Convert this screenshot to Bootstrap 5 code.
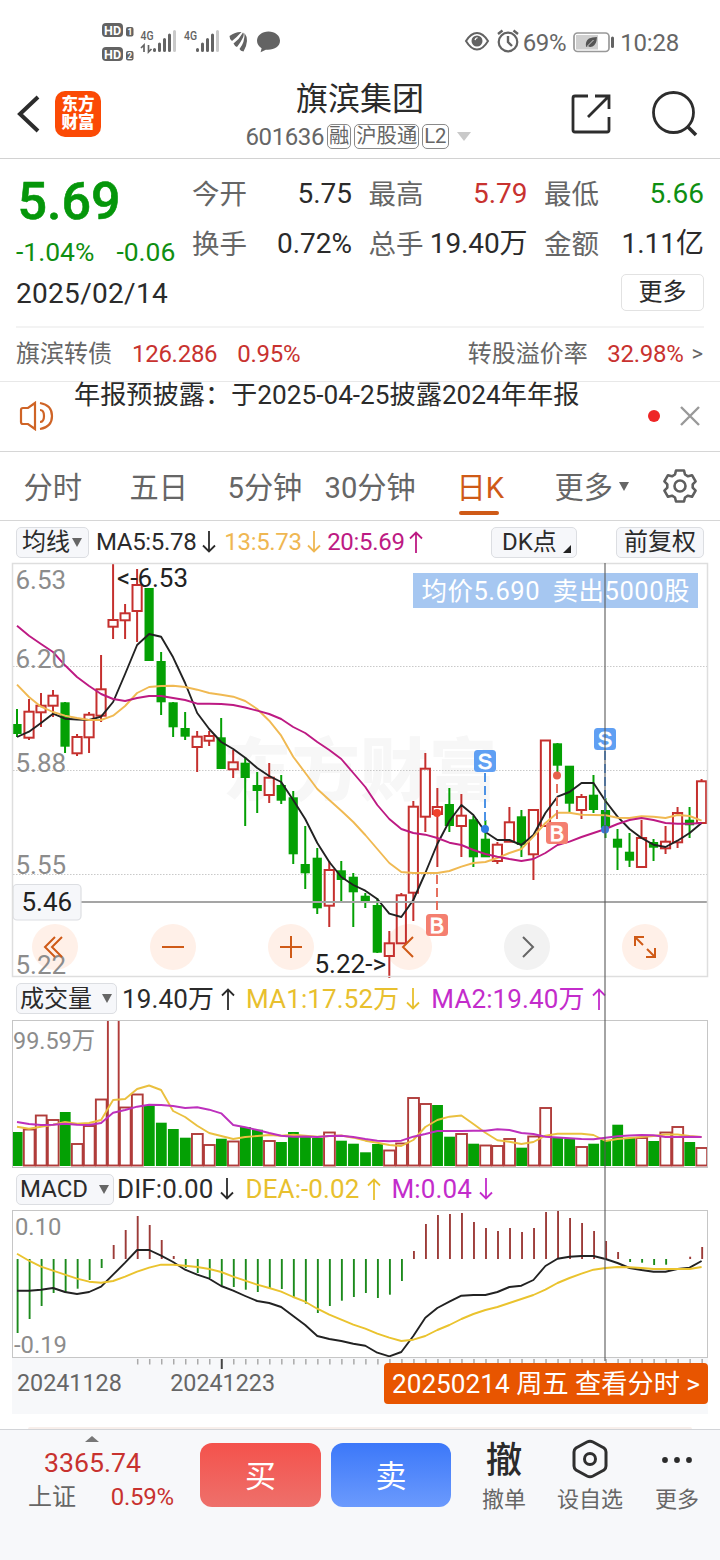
<!DOCTYPE html>
<html lang="zh-CN">
<head>
<meta charset="utf-8">
<meta name="viewport" content="width=device-width, initial-scale=1">
<title>旗滨集团 601636</title>
<link href="https://cdn.jsdelivr.net/npm/bootstrap@5.3.0/dist/css/bootstrap.min.css" rel="stylesheet">
<style>
  :root { --up:#c8322f; --down:#0f8f12; --ink:#2b2b2b; --dim:#666; --plum:#bd1a83; --brand:#cf5a17; }
  body { width:720px; height:1560px; overflow:hidden; background:#fff; color:var(--ink); font-family:Roboto,"Noto Sans CJK SC",sans-serif; font-weight:400; line-height:1; }
  svg { display:block; flex:none; overflow:visible; }
  #volume, .arrow { overflow:hidden; }
  svg text { font-family:Roboto,"Noto Sans CJK SC",sans-serif; }
  .c-up { color:var(--up); } .c-down { color:var(--down); } .c-dim { color:var(--dim); }
  .c-gold { color:#efb752; } .c-plum { color:var(--plum); } .c-yellow { color:#e8c02e; } .c-violet { color:#c32ccb; }
  .status { height:78px; padding:6px 41px 0 100px; color:#666; font-size:24px; }
  .titlebar { height:81px; border-bottom:1px solid #d2d2d2; display:grid; grid-template-columns:1fr auto 1fr; }
  .app-logo { width:46px; height:46px; border-radius:10px; background:#fb4a05; color:#fff; font-size:16.5px; line-height:18px; font-weight:900; padding-top:5px; margin-left:15px; }
  .stock-name { font-size:32px; line-height:36px; }
  .stock-code { font-size:24px; height:29px; margin-top:5px; margin-left:-4px; }
  .chip { border:1.5px solid #8a8a8a; border-radius:5px; font-size:20.3px; height:25px; line-height:23px; padding:0 1px; margin-left:3px; }
  .caret { width:0; height:0; border:6px solid transparent; border-bottom:0; border-top:9px solid #666; }
  .quote { height:167px; padding:9px 16px 0; }
  .big-price { font-size:52px; font-weight:500; line-height:67px; padding-left:1.5px; color:#05960a; -webkit-text-stroke:.6px #05960a; }
  .stats { display:grid; grid-template-columns:160px 159px 160px; grid-auto-rows:50px; column-gap:16.5px; font-size:28px; line-height:50px; padding-top:1px; }
  .stats .label { color:var(--dim); font-size:27.5px; position:relative; top:1px; }
  .more-btn { width:83px; height:37px; border:1.5px solid #e2e2e2; border-radius:5px; background:#fff; color:var(--ink); font-size:24px; line-height:33px; padding:0; margin-bottom:2px; }
  .bond { height:55px; margin:0 16px; border-top:2px solid #f3f3f3; font-size:24px; padding-bottom:2px; }
  .bond .c-up { letter-spacing:-.28px; }
  .news { height:71px; border-top:1px solid #e8e8e8; border-bottom:1px solid #d6d6d6; padding:0 20px 2px 18px; }
  .news-text { font-size:26.2px; line-height:26px; margin-left:20px; }
  .red-dot { width:12px; height:12px; border-radius:50%; background:#ee2525; }
  .periods { height:69px; border-bottom:1px solid #d6d6d6; display:grid; grid-template-columns:106px 98px 97px 132px 98px 107px 1fr; padding:0 0 0 23.5px; font-size:29.2px; color:var(--dim); }
  .periods span { padding-top:6px; }
  .periods .on { color:var(--brand); position:relative; }
  .periods .on::after { content:""; position:absolute; left:2px; width:40px; height:4px; border-radius:2px; background:var(--brand); bottom:5px; }
  .legend { padding:0 16px; font-size:26px; letter-spacing:.12px; }
  .legend.ma { font-size:24px; letter-spacing:-.32px; }
  .arrow { margin-left:7px; fill:none; stroke:currentColor; stroke-width:1.8; }
  .arrow + .item { margin-left:11px; }
  .ma .arrow { margin-left:6px; }
  .ma .arrow + .item { margin-left:8px; }
  .ma .arrow.c-gold { margin-left:5px; }
  .ma .arrow.c-gold + .item { margin-left:6.5px; }
  .ma .arrow.c-plum { margin-left:4px; }
  .tag-btn { background:#f6f7fa; border:1.5px solid #dcdee2; border-radius:5px; height:31px; font-size:24px; line-height:28px; color:var(--ink); padding:0 5px; white-space:nowrap; letter-spacing:0; }
  .tag-btn .caret { border-left-width:5px; border-right-width:5px; }
  .panels { position:relative; }
  .crosshair { position:absolute; left:604px; top:42px; width:2px; height:798px; background:#5a5a5a; opacity:.55; }
  .plot { margin-left:12px; }
  .dates { position:relative; margin:0 12px; height:56px; background:#f7f8fa; color:#666; font-size:23.3px; }
  .view-day { position:absolute; right:0; top:5px; height:41px; width:324px; background:#e85500; color:#fff; border-radius:4px; font-size:26.2px; line-height:42px; text-align:center; white-space:nowrap; }
  .peek { height:15px; padding:13px 28px 0; } .peek div { height:2px; background:#f8efeb; border-radius:12px 12px 0 0; }
  .tradebar { height:131px; background:#f7f8fa; border-top:1px solid #d2d4d8; padding:0 15px 0 16px; }
  .trade-btn { height:64px; border:0; border-radius:12px; color:#fff; font-size:31px; line-height:64px; padding:2px 0 0; }
  .buy { width:121px; background:linear-gradient(#f4524c,#ee706b); }
  .sell { width:120px; background:linear-gradient(#3c78f9,#6b9afd); }
  .act { font-size:22px; color:#666; } .act .pic { height:46px; display:flex; align-items:center; justify-content:center; color:#2b2b2b; }
</style>
</head>
<body>

<div class="status d-flex align-items-center">
  <svg width="184" height="46" viewBox="100 19 184 46" fill="#636363">
    <rect x="102" y="23" width="21" height="14" rx="4"/><rect x="102" y="47" width="21" height="14" rx="4"/>
    <rect x="126" y="27" width="7.500" height="9.500" rx="2"/><rect x="126" y="51" width="7.500" height="9.500" rx="2"/>
    <g fill="#fff" font-weight="700"><text x="104" y="34.500" font-size="12.500" textLength="17">HD</text><text x="104" y="58.500" font-size="12.500" textLength="17">HD</text><text x="127.500" y="35" font-size="8.500">1</text><text x="127.300" y="59" font-size="8.500">2</text></g>
    <g font-size="13.500" font-weight="500"><text x="140.500" y="40" textLength="13" lengthAdjust="spacingAndGlyphs">4G</text><text x="184" y="40" textLength="13" lengthAdjust="spacingAndGlyphs">4G</text></g>
    <path d="M141 48l3-3v7M148.500 45v7l3-3" fill="none" stroke="#636363" stroke-width="1.700"/>
    <g stroke="#636363" stroke-width="3" stroke-linecap="round"><path d="M154.500 49.500v1M159.500 44v6.500M164.500 39.500v11M169.500 35v15.500M197.500 49.500v1M202.500 44v6.500M207.500 39.500v11M212.500 35v15.500"/><path stroke="#c9c9c9" d="M174.500 31.500v19M217.500 31.500v19"/></g>
    <path d="M229.500 36Q236 31.500 241.500 32Q237 37 232 41Q229.500 39.500 229.500 36zM233.500 43.500Q239.500 39 243 32.500Q246 35 237 47Q234.500 46 233.500 43.500zM239.500 49Q245 42 244.500 33Q250 40 243.500 51.500Q240.500 51 239.500 49z"/>
    <path d="M268.500 31.500c-6.500 0-11.500 4-11.500 9.300 0 3.300 1.800 5.800 4.600 7.500l-1 4 5.200-2.600c8 .8 14.200-3 14.200-8.900 0-5.300-5-9.300-11.500-9.300z"/>
  </svg>
  <div class="d-flex align-items-center ms-auto">
    <svg width="57" height="28" viewBox="464 28 57 28" fill="none" stroke="#636363" stroke-width="2"><path d="M466 41Q471 33 477 33T488 41Q483 49.500 477 49.500T466 41z"/><circle cx="477" cy="41" r="4.500" fill="#636363"/><path d="M475 40q.5-2 2.500-2.300" stroke="#fff" stroke-width="1.300"/><circle cx="508" cy="42" r="9.300" stroke-width="2.200"/><path d="M508 36v6l4 4M498 34l4.500-3.500M518 34l-4.500-3.500" stroke-width="2.400"/></svg>
    <span style="letter-spacing:-.35px;margin:2px 0 0 2px">69%</span>
    <svg style="margin:0 4px 0 7px" width="43" height="22" viewBox="0 0 43 22"><rect x="1" y="2" width="35" height="18.500" rx="3.500" fill="#fff" stroke="#999" stroke-width="1.700"/><rect x="3" y="4" width="22" height="14.500" fill="#cfcfcf"/><path d="M13 16q-1-6 3-8.500 3-1.500 8-1.500-.5 8-4.500 9.500-3 1-4.500-.5z" fill="#555"/><path d="M14.500 15l6-6" stroke="#cfcfcf"/><rect x="38" y="5.500" width="3" height="11.500" rx="1.500" fill="#636363"/></svg>
    <span style="letter-spacing:-.2px;margin-top:2px">10:28</span>
  </div>
</div>

<header class="titlebar">
  <div class="d-flex align-items-center ps-3" style="height:72px">
    <svg width="24" height="38" viewBox="0 0 24 38"><path d="M22 2L4 19 22 36" fill="none" stroke="#2c2c2c" stroke-width="4"/></svg>
    <div class="app-logo text-center">东方<br>财富</div>
  </div>
  <div class="text-center" style="padding-top:3px">
    <div class="stock-name">旗滨集团</div>
    <div class="stock-code d-flex align-items-center c-dim"><span style="letter-spacing:-.4px">601636</span><span class="chip">融</span><span class="chip">沪股通</span><span class="chip">L2</span><i class="caret ms-2" style="border-left-width:7px;border-right-width:7px;border-top-color:#c9c9c9"></i></div>
  </div>
  <div class="d-flex align-items-center justify-content-end pe-3" style="height:72px">
    <svg width="42" height="42" viewBox="570 93 42 42" fill="none" stroke="#2d2d2d" stroke-width="2.800"><path d="M588 96H575q-2 0-2 2v32q0 2 2 2h32q2 0 2-2V117"/><path d="M595 96h14v13M608 97L588 117"/></svg>
    <svg style="margin-left:38px;margin-right:6px" width="48" height="48" viewBox="650 90 48 48" fill="none" stroke="#2d2d2d"><circle cx="673.500" cy="112.500" r="20" stroke-width="2.800"/><path d="M687 126l9 9" stroke-width="3.600"/></svg>
  </div>
</header>

<section class="quote">
  <div class="d-flex align-items-start" style="height:102px">
    <div style="width:176px">
      <div class="big-price">5.69</div>
      <div class="d-flex c-down" style="font-size:26.500px;gap:22px;line-height:34px"><span>-1.04%</span><span>-0.06</span></div>
    </div>
    <div class="stats">
      <div class="d-flex justify-content-between"><span class="label">今开</span><span>5.75</span></div>
      <div class="d-flex justify-content-between"><span class="label">最高</span><span class="c-up">5.79</span></div>
      <div class="d-flex justify-content-between"><span class="label">最低</span><span class="c-down">5.66</span></div>
      <div class="d-flex justify-content-between"><span class="label">换手</span><span>0.72%</span></div>
      <div class="d-flex justify-content-between"><span class="label">总手</span><span style="letter-spacing:-.1px">19.40万</span></div>
      <div class="d-flex justify-content-between"><span class="label">金额</span><span>1.11亿</span></div>
    </div>
  </div>
  <div class="d-flex justify-content-between align-items-center" style="height:46px"><span style="font-size:28px;letter-spacing:.3px;padding-top:2px">2025/02/14</span><button class="more-btn">更多</button></div>
</section>

<section class="bond d-flex align-items-center">
  <span class="c-dim">旗滨转债</span><span class="c-up" style="margin-left:20px">126.286</span><span class="c-up" style="margin-left:20px">0.95%</span>
  <span class="c-dim ms-auto">转股溢价率</span><span class="c-up" style="margin-left:19.500px">32.98%</span><span class="c-dim" style="font-size:22px;margin:0 1px 0 8px">&gt;</span>
</section>

<section class="news d-flex">
  <svg class="mt-auto mb-auto" width="36" height="34" viewBox="0 0 36 34" fill="none" stroke="#cf6426" stroke-width="2.200"><path d="M17 4v26l-7-5H5q-2 0-2-2V11q0-2 2-2h5zM22 11q4 0 4 6t-4 6M22 4q12 2 12 13t-12 13"/></svg>
  <div class="news-text">年报预披露：于2025-04-25披露2024年年报</div>
  <div class="d-flex align-items-center ms-auto gap-3"><i class="red-dot"></i><svg class="ms-1" width="20" height="20" viewBox="0 0 20 20"><path d="M1 1l18 18M19 1L1 19" stroke="#999" stroke-width="2.400"/></svg></div>
</section>

<nav class="periods align-items-center">
  <span>分时</span><span>五日</span><span>5分钟</span><span>30分钟</span><span class="on h-100 d-flex align-items-center">日K</span>
  <span class="d-flex align-items-center">更多<i class="caret" style="border-left-width:5px;border-right-width:5px;margin:-4px 0 0 6px"></i></span>
  <svg width="36" height="36" viewBox="-18 -18 36 36" fill="none" stroke="#5f5f5f" stroke-width="2.600" stroke-linejoin="round"><path d="M-4-15.500H4L5-11.500 8-9.700 12-10.800 15.600-4.600 12.700-1.700V1.700L15.600 4.600 12 10.800 8 9.700 5 11.500 4 15.500H-4L-5 11.500-8 9.700-12 10.800-15.600 4.600-12.700 1.700V-1.700L-15.600-4.600-12-10.800-8-9.700-5-11.500Z"/><circle r="5.500"/></svg>
</nav>

<main class="panels">
  <div class="legend ma d-flex align-items-center" style="height:42px">
    <span class="tag-btn d-flex align-items-center" style="width:73px">均线<i class="caret" style="margin-left:2px"></i></span>
    <span style="margin-left:7px">MA5:5.78</span><svg class="arrow" width="14" height="22" viewBox="0 0 14 22"><path d="M7 0v20M1 14.500l6 6 6-6"/></svg>
    <span class="item c-gold">13:5.73</span><svg class="arrow c-gold" width="14" height="22" viewBox="0 0 14 22"><path d="M7 0v20M1 14.500l6 6 6-6"/></svg>
    <span class="item c-plum">20:5.69</span><svg class="arrow c-plum" width="14" height="22" viewBox="0 0 14 22"><path d="M7 22V2M1 7.500l6-6 6 6"/></svg>
    <span class="tag-btn ms-auto d-flex" style="width:86px;padding-left:10px">DK点<svg class="ms-auto align-self-end mb-1" width="8" height="8"><path d="M8 0v8H0z" fill="#222"/></svg></span>
    <span class="tag-btn" style="margin-left:39px;padding:0 7px">前复权</span>
  </div>
  <svg class="plot" id="price" width="696" height="414" viewBox="12 563 696 414"></svg>
  <div class="legend d-flex align-items-center" style="height:43px">
    <span class="tag-btn d-flex align-items-center" style="width:101px;padding:0 4px 0 3px">成交量<i class="caret ms-auto"></i></span>
    <span style="margin-left:5px">19.40万</span><svg class="arrow" width="14" height="22" viewBox="0 0 14 22"><path d="M7 22V2M1 7.500l6-6 6 6"/></svg>
    <span class="item c-yellow">MA1:17.52万</span><svg class="arrow c-yellow" width="14" height="22" viewBox="0 0 14 22"><path d="M7 0v20M1 14.500l6 6 6-6"/></svg>
    <span class="item c-violet">MA2:19.40万</span><svg class="arrow c-violet" width="14" height="22" viewBox="0 0 14 22"><path d="M7 22V2M1 7.500l6-6 6 6"/></svg>
  </div>
  <svg class="plot" id="volume" width="696" height="148" viewBox="12 1020 696 148"></svg>
  <div class="legend d-flex align-items-center" style="height:42px">
    <span class="tag-btn d-flex align-items-center" style="width:98px;padding:0 4px 0 3px">MACD<i class="caret ms-auto"></i></span>
    <span style="margin-left:3px">DIF:0.00</span><svg class="arrow" width="14" height="22" viewBox="0 0 14 22"><path d="M7 0v20M1 14.500l6 6 6-6"/></svg>
    <span class="item c-yellow">DEA:-0.02</span><svg class="arrow c-yellow" width="14" height="22" viewBox="0 0 14 22"><path d="M7 22V2M1 7.500l6-6 6 6"/></svg>
    <span class="item c-violet">M:0.04</span><svg class="arrow c-violet" width="14" height="22" viewBox="0 0 14 22"><path d="M7 0v20M1 14.500l6 6 6-6"/></svg>
  </div>
  <svg class="plot" id="macd" width="696" height="148" viewBox="12 1210 696 148"></svg>
  <div class="dates">
    <svg id="ticks" width="696" height="12" viewBox="12 1358 696 12"></svg>
    <div class="d-flex" style="padding:2px 0 0 5px;gap:48.500px"><span>20241128</span><span>20241223</span></div>
    <div class="view-day">20250214 周五 查看分时 &gt;</div>
  </div>
  <div class="crosshair"></div>
</main>
<div class="peek"><div></div></div>

<footer class="tradebar d-flex align-items-start">
  <div style="width:184px;padding-top:6px">
    <i class="caret d-block" style="margin-left:69px;border:7px solid transparent;border-top:0;border-bottom:6px solid #777"></i>
    <div class="c-up" style="font-size:26.700px;line-height:34px;margin:4px 0 0 28px">3365.74</div>
    <div class="d-flex justify-content-between" style="font-size:24px;line-height:34px;padding:0 26px 0 12px"><span class="c-dim">上证</span><span class="c-up" style="letter-spacing:-.2px">0.59%</span></div>
  </div>
  <button class="trade-btn buy" style="margin-top:13px">买</button>
  <button class="trade-btn sell" style="margin:13px 0 0 10px">卖</button>
  <div class="act text-center" style="margin:7px 0 0 31px;width:44px"><div class="pic" style="font-size:36.500px;font-weight:500;padding-top:3px">撤</div><div style="margin-top:6px">撤单</div></div>
  <div class="act text-center" style="margin:7px 0 0 31px;width:66px"><div class="pic" style="padding-bottom:3px"><svg width="38" height="42" viewBox="-19 -21 38 42" fill="none" stroke="#2f2f2f" stroke-width="3"><path d="M-3-17Q0-18.500 3-17L14-11Q16-9.500 16-7V7Q16 9.500 14 11L3 17Q0 18.500-3 17L-14 11Q-16 9.500-16 7V-7Q-16-9.500-14-11Z"/><circle r="5.500"/></svg></div><div style="margin-top:6px">设自选</div></div>
  <div class="act text-center" style="margin:7px 0 0 32px;width:44px"><div class="pic" style="padding-bottom:2px"><svg width="32" height="8"><g fill="#2b2b2b"><circle cx="4" cy="5" r="2.900"/><circle cx="16" cy="5" r="2.900"/><circle cx="28" cy="5" r="2.900"/></g></svg></div><div style="margin-top:6px">更多</div></div>
</footer>

<script src="https://cdn.jsdelivr.net/npm/bootstrap@5.3.0/dist/js/bootstrap.bundle.min.js"></script>
<script>
const X = i => 17 + 12.01 * i;
const RED = '#c5302e', GREEN = '#04a004', GREY = '#8c8c8c';
const line = (x1, y1, x2, y2, c, w = 2, extra = '') => `<path d="M${x1} ${y1}L${x2} ${y2}" stroke="${c}" stroke-width="${w}" fill="none" ${extra}/>`;
const curve = (ys, c) => `<polyline points="${ys.map((y, i) => X(i).toFixed(1) + ',' + y).join(' ')}" fill="none" stroke="${c}" stroke-width="1.9" stroke-linejoin="round"/>`;
const label = (x, y, s, size, c, extra = '') => `<text x="${x}" y="${y}" font-size="${size}" fill="${c}" ${extra}>${s}</text>`;

/* direction, high, body top, body bottom, low */
const candles = [
['g',709,724,734,737],['r',699,711.7,737.7,740],['r',693,705.7,712.3,727],['r',690,695.7,705.7,717],['g',702,702.3,746.7,753],['r',734,737,753.3,756],['r',712,714.7,737.3,753],['r',655,689.3,715.7,722],['r',563,620,626.7,639],['r',604,613.3,620.3,639],
['r',569,585,611,642],['g',588,588,661,661],['g',652,661,702.3,715],['g',702,702.3,727.3,737],['g',712,728,736.7,740],['r',731,736.7,747,772],['r',731,736,740.7,746],['g',718,737.3,769,769],['r',750,762.3,769.3,778],['g',757,762.7,778,826],
['g',772,785,791,813],['r',763,777.7,795,803],['g',775,785,800.7,804],['g',791,797.3,854.3,864],['g',826,864,873.3,889],['g',848,857.7,908.3,914],['r',861,870,905.7,927],['g',861,870.3,880,902],['g',873,876.7,892.3,927],['g',893,895.7,902,908],
['g',898,905,952.7,953],['r',931,943.3,956,978],['r',893,895.3,943.3,943],['r',801,806.7,892.7,921],['r',753,768.7,816.7,832],['r',788,807,814,867],['g',788,804,826,832],['r',794,815.7,826,857],['g',816,819.3,857.3,867],['g',820,838.7,857.3,857],
['r',842,844.7,861,864],['r',807,822.3,841.7,842],['g',810,816.3,845,857],['r',809,810,854.3,880],['r',740,740.5,826,826],['g',743,743.3,765.7,772],['g',766,765.7,803.7,812],['r',794,797,810,819],['g',775,794.7,810,813],['g',798,810,828,838],
['g',829,838.7,847.7,870],['g',833,851.7,860.7,867],['r',820,838,867,867],['g',839,842,847.7,861],['r',826,841.7,848.3,854],['r',807,813,842.3,848],['g',807,819.7,825.3,838],['r',779,781.3,823,823]];
const ma5 = [737,731.7,723,713.7,718.7,719.5,720,716.7,702,674,645,634,636.7,657.3,683,713,729,742,749,757.7,768,776,782,800,819,843,862,877,885,890.7,899,913.7,917,900,873,844,821,805,815,832,840,840,845,835,813,796.7,792,783,783,801,816.7,829,838,844.7,847,840.7,833,823];
const ma13 = [684.7,697,706.7,712,715.7,718,720,720,715.7,706,693,687,686,685.7,687,689.7,693,694.7,696.7,701,709,720.7,735.7,756.7,772.7,789,800,810.7,822,835,849,863,872,873,873,873,871,866.7,863,862,858,853,849,836.7,823,812.7,812.7,814.7,815,815.3,817.7,818,816.3,816.7,818,815,816,820.7];
const ma20 = [625.7,635.7,644,652,665.3,677,686,694,699,701,698,696,696,698,700,703.7,703.7,704,705,707.5,710.7,714,719,727,733,742,750,759,773,787,805,819,829,833,834.7,838,842.7,845,850,854,856.7,859,861,859,853,845,841.7,837,833,829,824,820,818,820,823,823.7,823.7,823];

let s = '';
s += label(223, 795, '东方财富', 68, '#f7f7f7', 'font-weight="900" textLength="274"');
[666.5, 770.5, 874.5].forEach(y => s += line(13, y, 707, y, '#c9c9c9', 1, 'stroke-dasharray="1.500 1.500"'));
[55, 173, 291, 409, 527, 645].forEach((x, i) => s += `<circle cx="${x}" cy="947" r="23" fill="${i === 4 ? '#f2f2f2' : '#fff0e8'}"/>`);
candles.forEach(([d, h, t, b, l], i) => {
  const x = X(i);
  if (d === 'g') s += line(x, h, x, l, GREEN) + `<rect x="${x - 4.6}" y="${t}" width="9.200" height="${b - t}" fill="${GREEN}"/>`;
  else s += line(x, h, x, t, RED) + line(x, b, x, l, RED) + `<rect x="${x - 4.6}" y="${t}" width="9.200" height="${b - t}" fill="none" stroke="${RED}" stroke-width="2"/>`;
});
s += curve(ma5, '#222') + curve(ma13, '#f0b952') + curve(ma20, '#bd1a83');
[['6.53',589],['6.20',667.5],['5.88',771.5],['5.55',874],['5.22',974]].forEach(([v, y]) => s += label(15.5, y, v, 26, GREY));
s += line(81, 902, 707, 902, '#a5a5a5', 2) + `<rect x="13" y="884.500" width="68" height="35.500" rx="4" fill="#f6f7fa" stroke="#dcdee2" stroke-width="1.200"/>` + label(21.5, 911, '5.46', 26, '#222');
const orange = 'fill="none" stroke="#cf5a17" stroke-width="2"';
s += `<path ${orange} d="M55 937L45 947l10 10M62 937l-10 10 10 10M162 947h22M280 947h22M291 936v22M413 937l-10 10 10 10"/>`;
s += `<path d="M523 937l10 10-10 10" fill="none" stroke="#666" stroke-width="2"/>`;
s += `<path ${orange} d="M635 946v-9h9M635 937l8 8M655 948v9h-9M655 957l-8-8"/>`;
s += label(117, 587, '&lt;-6.53', 26, '#222') + label(314.5, 973, '5.22-&gt;', 26, '#222');
const dash = 'stroke-dasharray="9 4"';
s += line(485, 773, 485, 829, '#4d93e6', 2, dash) + line(605, 751, 605, 829, '#4d93e6', 2, dash);
s += line(437, 875, 437, 914, '#e5705e', 2, dash) + line(557, 784, 557, 822, '#e5705e', 2, dash);
s += `<circle cx="485" cy="829" r="4" fill="#2f7fe6"/><circle cx="605" cy="829.500" r="4" fill="#3b78d8"/><circle cx="437" cy="813" r="4" fill="#f0412c"/><circle cx="557" cy="775.500" r="4" fill="#e8604a"/>`;
[[485,761,'S','#5f9ff3'],[605,739,'S','#5f9ff3'],[437,925,'B','#f47f70'],[557,833,'B','#f47f70']].forEach(([x, y, t, c]) =>
  s += `<rect x="${x - 11}" y="${y - 11}" width="22" height="22" rx="3.500" fill="${c}"/>` + label(x, y + 7.5, t, 21.5, '#fff', 'style="font-family:\'Liberation Sans\',sans-serif" stroke="#fff" stroke-width=".9" text-anchor="middle"'));
s += `<rect x="413" y="573" width="285" height="35" fill="#a6c7f1"/>` + label(421.5, 600, '均价5.690', 25.5, '#fff', 'textLength="118"') + label(552.5, 600, '卖出5000股', 25.5, '#fff', 'textLength="137"');
s += `<rect x="12.500" y="563.500" width="695" height="413" fill="none" stroke="#dedede" stroke-width="1.500"/>`;
document.getElementById('price').innerHTML = s;

const vols = 'g1132 r1129.500 r1115.500 r1120 g1112 r1144 r1126 r1099.500 r1000 r1107.500 r1094.500 g1105.700 g1122.700 g1129 g1137.700 r1134 r1145 g1138.700 r1141.500 g1127 g1129.700 r1141 g1142 g1132 g1137 g1138 r1132.500 g1140.700 g1143.700 g1152.300 g1144 r1150.500 r1143.500 r1098 r1104 g1105 g1136.700 r1134 g1143.700 r1145.500 r1146 r1139 g1147.700 r1136.500 r1108 g1137.700 g1139 r1147 g1143.700 g1140 g1124.700 g1138 r1138 g1141 r1132.500 r1127 g1142 r1148'.split(' ');
const v1 = [1126.7,1128.7,1126.7,1124.7,1122,1123.7,1123,1120,1100,1099,1089,1085.5,1090,1111,1117,1125.7,1133,1136,1139,1137,1136,1135,1135.7,1134.7,1135.7,1136.7,1136,1135.5,1137.7,1140.7,1142.7,1145,1146,1140,1127,1120,1116.7,1115.5,1124,1132.7,1140.3,1141.7,1144,1142,1135.7,1133.7,1133.7,1133.7,1135,1141,1139,1138,1137,1136,1134.5,1134.5,1136,1137];
const v2 = [1122,1124,1125,1124.7,1123.7,1124.7,1125,1123,1112.7,1110,1106.7,1104.7,1105,1106,1108,1107.3,1109.7,1113.3,1125,1127.3,1130,1133,1135.7,1136.7,1136.5,1137,1136,1135.7,1137,1139,1140.7,1141.3,1140.7,1136.7,1134,1131,1131,1131,1130.7,1130.7,1129.3,1130,1133,1134,1136.7,1137.5,1138.3,1139,1139.3,1137.7,1136.3,1135.5,1135,1135.3,1137,1137,1136.7,1137];
s = '';
vols.forEach((v, i) => {
  const x = X(i) + .2, y = +v.slice(1);
  s += v[0] === 'g' ? `<rect x="${x - 5.4}" y="${y}" width="10.800" height="${1166 - y}" fill="${GREEN}"/>`
    : `<rect x="${x - 5.4}" y="${y}" width="10.800" height="${1165.5 - y}" fill="#fff" stroke="#b03c3a" stroke-width="1.900"/>`;
});
s += curve(v1, '#eac03f') + curve(v2, '#bd30bd') + label(13, 1049, '99.59万', 23.4, GREY);
s += `<rect x="12.500" y="1020.500" width="695" height="147" fill="none" stroke="#c6c6c6"/>`;
document.getElementById('volume').innerHTML = s;

const hist = [1333,1319,1306,1293,1292,1288.7,1280,1268,1245,1230,1216,1225,1240,1256,1268,1273,1278,1285.7,1287,1289.7,1292,1288,1289,1298,1303.7,1313,1306,1300.7,1297,1293,1298,1294.7,1281,1251,1224,1215,1214,1213,1222,1228,1231,1228,1232,1228,1212,1210,1218,1223,1231,1241,1252,1262,1262.7,1265,1264.7,1259,1256.7,1247];
const dif = [1290.7,1290.7,1289.7,1288,1292,1294,1292,1286.7,1274.7,1262.7,1250,1250,1255.7,1262,1269.7,1274.7,1278.7,1286,1290.7,1296,1301,1303,1307,1316,1325,1336,1339,1341,1343.7,1345.7,1352.7,1356.3,1352,1336,1317.7,1308,1301.7,1295.7,1295,1295,1292,1287,1285.7,1280,1266,1258.7,1256.7,1256,1256,1259,1263,1268,1270,1271.7,1271.7,1269,1267.7,1261];
const dea = [1253.7,1260.7,1266.7,1270.7,1274.7,1278.7,1281.7,1282.7,1281,1276.7,1271.7,1267.7,1264.7,1264.7,1265.7,1267,1269,1272,1276.7,1280.7,1284.7,1288,1291.7,1297,1301.7,1308.7,1314.7,1319.7,1324.7,1328.7,1333.7,1337.7,1341,1339.7,1336,1330,1325,1319,1314,1310,1307,1303,1299,1295,1289.7,1283,1278,1273.7,1269.7,1268,1267,1267.3,1268,1269,1269,1269,1269,1267];
s = '';
hist.forEach((y, i) => s += line(X(i) + .6, 1259, X(i) + .6, y, y > 1259 ? '#1c8a1c' : '#9c3b38', 1.9));
s += curve(dif, '#222') + curve(dea, '#eac32e') + label(15, 1235, '0.10', 23.8, GREY) + label(14, 1353, '-0.19', 23.8, GREY);
s += `<rect x="12.500" y="1210.500" width="695" height="147" fill="none" stroke="#c6c6c6"/>`;
document.getElementById('macd').innerHTML = s;

s = '';
for (let i = 10; i < 58; i++) s += line(X(i) + .6, 1359, X(i) + .6, i === 17 ? 1369 : 1364.5, i === 17 ? '#444' : '#aaa', i === 17 ? 2 : 1.5);
document.getElementById('ticks').innerHTML = s;
</script>
</body>
</html>
